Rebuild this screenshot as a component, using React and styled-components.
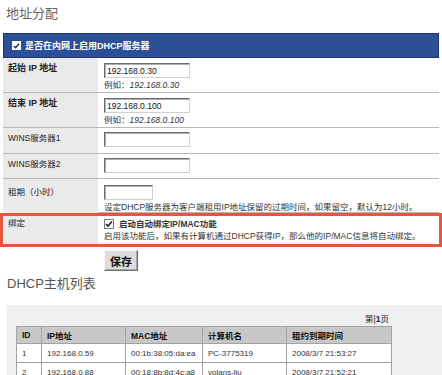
import React from "react";
import styled, { createGlobalStyle } from "styled-components";

const Global = createGlobalStyle`
  html, body { margin: 0; padding: 0; background: #fff; }
  body {
    font-family: "Liberation Sans", "Noto Sans CJK SC", sans-serif;
    font-size: 8.5px;
    color: #222;
  }
  * { box-sizing: border-box; }
`;

const Page = styled.div`
  width: 442px;
  height: 375px;
  overflow: hidden;
`;

const Title = styled.h1`
  margin: 4px 0 11px 6px;
  font-family: "Noto Sans CJK SC", sans-serif;
  font-size: 13px;
  line-height: 18px;
  font-weight: normal;
  color: #666;
`;

const Form = styled.div`
  margin: 0 3px;
  width: 436px;
`;

const Header = styled.div`
  height: 25px;
  background: #2d4f95;
  border: 1px solid #1d3670;
  display: flex;
  align-items: center;
  gap: 4px;
  padding-left: 8px;
  color: #fff;
  font-weight: bold;
  font-size: 9px;
`;

const Row = styled.div`
  display: grid;
  grid-template-columns: 95px 1fr;
  height: ${(p) => p.$h}px;
  border-bottom: 1px solid #b8b8b8;
`;

const BindRow = styled.div`
  display: grid;
  grid-template-columns: 95px 1fr;
  height: 34px;
  margin: 0 -3px;
  border: 3px solid #e3583c;
`;

const Label = styled.div`
  background: #eaeaea;
  padding: ${(p) => p.$pt ?? 4}px 5px 0;
  line-height: 12px;
  font-size: ${(p) => (p.$bold ? 9 : 8.5)}px;
  font-weight: ${(p) => (p.$bold ? "bold" : "normal")};
  color: #222;
`;

const Value = styled.div`
  padding: ${(p) => p.$pt ?? 5}px 6px 0;
  display: flex;
  flex-direction: column;
  align-items: flex-start;
  line-height: 12px;
  color: #333;
`;

const TextInput = styled.input`
  width: ${(p) => p.$w}px;
  height: 15px;
  margin: 0 0 1px;
  padding: 0 2px;
  font-family: "Liberation Sans", sans-serif;
  font-size: 8.5px;
  color: #111;
  background: #fff;
  border: 1px solid;
  border-color: #6b6b6b #d0d0d0 #d0d0d0 #6b6b6b;
  box-shadow: inset 1px 1px 0 #b0b0b0;
  outline: none;
`;

const Example = styled.span`
  i { font-style: italic; color: #333; }
`;

const Line = styled.div`
  display: flex;
  align-items: center;
  gap: 5px;
  height: 12px;
  font-weight: ${(p) => (p.$bold ? "bold" : "normal")};
`;

const Check = styled.span`
  display: inline-flex;
  align-items: center;
  justify-content: center;
  width: ${(p) => p.$size}px;
  height: ${(p) => p.$size}px;
  background: #fff;
  border: 1px solid ${(p) => p.$border};
  flex: none;
`;

const Actions = styled.div`
  padding: 3px 0 0 101px;
`;

const SaveButton = styled.button`
  width: 34px;
  height: 21px;
  padding: 0;
  font-family: "Noto Sans CJK SC", sans-serif;
  font-size: 11px;
  font-weight: bold;
  color: #111;
  background: #dcdcdc;
  border: 1px solid;
  border-color: #f4f4f4 #6e6e6e #6e6e6e #f4f4f4;
  box-shadow: inset -1px -1px 0 #a8a8a8;
`;

const SectionTitle = styled.h2`
  margin: 5px 0 0 7px;
  font-family: "Liberation Sans", "Noto Sans CJK SC", sans-serif;
  font-size: 13px;
  line-height: 16px;
  font-weight: normal;
  color: #555;
`;

const Panel = styled.div`
  margin: 13px 0 0 7px;
  height: 80px;
  background: #efefef;
  padding: 8px 0 0 9px;
`;

const PageInfo = styled.div`
  width: 375px;
  text-align: right;
  line-height: 12px;
  margin-bottom: 1px;
  padding-right: 2px;
  color: #222;
  b { font-weight: bold; }
`;

const Table = styled.table`
  width: 375px;
  border-collapse: collapse;
  table-layout: fixed;
  background: #fff;
  font-size: 8px;
  th, td {
    border: 1px solid #a3a3a3;
    padding: 0 5px;
    text-align: left;
    white-space: nowrap;
    overflow: hidden;
  }
  th {
    height: 17px;
    background: #c8c8c8;
    font-size: 8.5px;
    font-weight: bold;
    color: #111;
  }
  td {
    height: 19px;
    color: #333;
  }
`;

const Tick = ({ color = "#111" }) => (
  <svg width="8" height="8" viewBox="0 0 8 8">
    <path d="M1 4 L3 6 L7 1.5" fill="none" stroke={color} strokeWidth="1.6" />
  </svg>
);

const hosts = [
  ["1", "192.168.0.59", "00:1b:38:05:da:ea", "PC-3775319", "2008/3/7 21:53:27"],
  ["2", "192.168.0.88", "00:18:8b:8d:4c:a8", "volans-liu", "2008/3/7 21:52:21"],
];

export default function App() {
  return (
    <Page>
      <Global />
      <Title>地址分配</Title>
      <Form>
        <Header>
          <Check $size={9} $border="#fff">
            <Tick color="#1a2a50" />
          </Check>
          是否在内网上启用DHCP服务器
        </Header>
        <Row $h={35}>
          <Label $bold>起始 IP 地址</Label>
          <Value>
            <TextInput $w={86} defaultValue="192.168.0.30" />
            <Example>例如：<i>192.168.0.30</i></Example>
          </Value>
        </Row>
        <Row $h={35}>
          <Label $bold>结束 IP 地址</Label>
          <Value>
            <TextInput $w={86} defaultValue="192.168.0.100" />
            <Example>例如：<i>192.168.0.100</i></Example>
          </Value>
        </Row>
        <Row $h={26}>
          <Label>WINS服务器1</Label>
          <Value $pt={4}>
            <TextInput $w={86} />
          </Value>
        </Row>
        <Row $h={25}>
          <Label>WINS服务器2</Label>
          <Value $pt={4}>
            <TextInput $w={86} />
          </Value>
        </Row>
        <Row $h={34}>
          <Label $pt={7}>租期（小时）</Label>
          <Value $pt={6}>
            <TextInput $w={49} />
            <span>设定DHCP服务器为客户端租用IP地址保留的过期时间，如果留空，默认为12小时。</span>
          </Value>
        </Row>
        <BindRow>
          <Label $pt={1}>绑定</Label>
          <Value $pt={2}>
            <Line $bold>
              <Check $size={10} $border="#7a7a7a">
                <Tick color="#222" />
              </Check>
              启动自动绑定IP/MAC功能
            </Line>
            <span>启用该功能后，如果有计算机通过DHCP获得IP，那么他的IP/MAC信息将自动绑定。</span>
          </Value>
        </BindRow>
        <Actions>
          <SaveButton>保存</SaveButton>
        </Actions>
      </Form>
      <SectionTitle>DHCP主机列表</SectionTitle>
      <Panel>
        <PageInfo>第|<b>1</b>页</PageInfo>
        <Table>
          <colgroup>
            <col style={{ width: 25 }} />
            <col style={{ width: 84 }} />
            <col style={{ width: 77 }} />
            <col style={{ width: 84 }} />
            <col style={{ width: 105 }} />
          </colgroup>
          <thead>
            <tr>
              <th>ID</th>
              <th>IP地址</th>
              <th>MAC地址</th>
              <th>计算机名</th>
              <th>租约到期时间</th>
            </tr>
          </thead>
          <tbody>
            {hosts.map((h) => (
              <tr key={h[0]}>
                {h.map((c, i) => (
                  <td key={i}>{c}</td>
                ))}
              </tr>
            ))}
          </tbody>
        </Table>
      </Panel>
    </Page>
  );
}
